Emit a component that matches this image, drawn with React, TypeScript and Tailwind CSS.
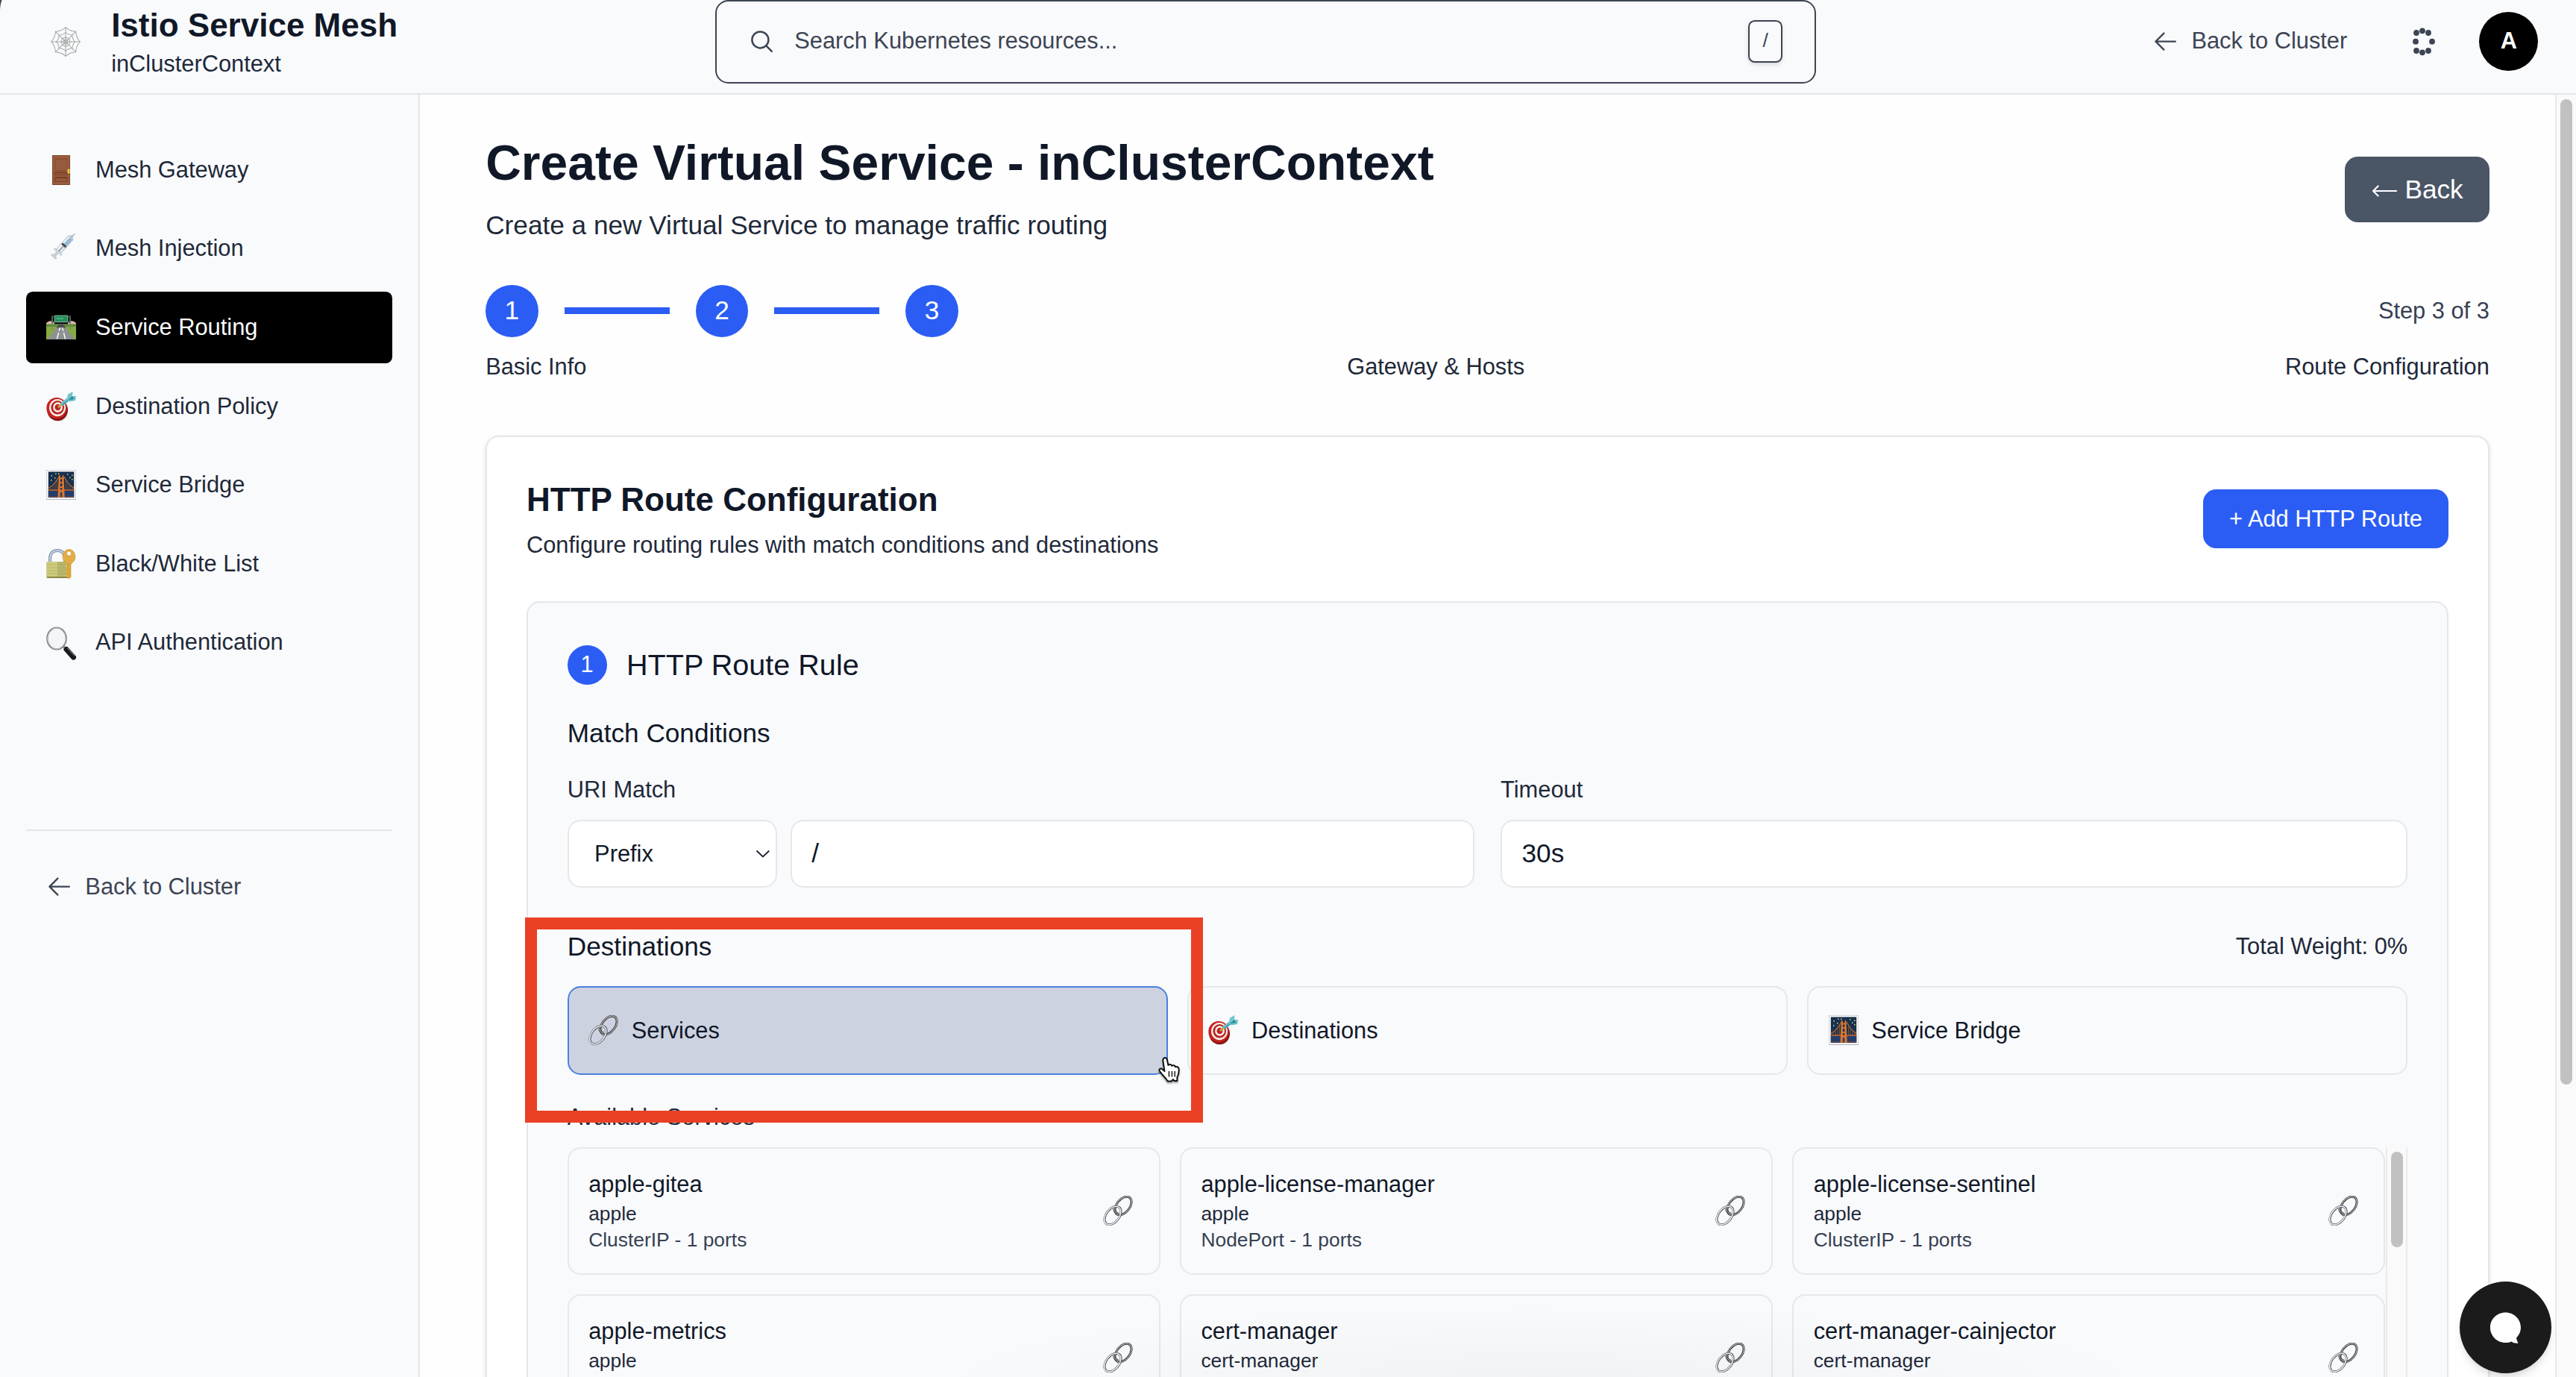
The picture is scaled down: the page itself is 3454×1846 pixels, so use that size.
import type { ReactNode } from "react";

/* ---------- pictograms ---------- */

const emojiClass = "size-[18.2px] shrink-0";

function WebIcon() {
  const angles = [0, 45, 90, 135, 180, 225, 270, 315];
  const pt = (a: number, r: number) => {
    const t = (a * Math.PI) / 180;
    return `${(20 + r * Math.sin(t)).toFixed(2)} ${(20 - r * Math.cos(t)).toFixed(2)}`;
  };
  const ring = (r: number) =>
    `M${pt(0, r)}` + angles.map((a) => `Q${pt(a + 22.5, r * 0.78)} ${pt(a + 45, r)}`).join("");
  return (
    <svg viewBox="0 0 40 40" className="h-[18.2px] w-[18.2px] shrink-0" fill="none" stroke="#a3a3a3" strokeWidth="1">
      {angles.map((a) => (
        <path key={a} d={`M20 20L${pt(a, 19.5)}`} />
      ))}
      <path d={ring(19.3)} />
      <path d={ring(12.5)} />
      <path d={ring(6.5)} />
      <path d={ring(3.2)} />
    </svg>
  );
}

function DoorIcon() {
  return (
    <svg viewBox="0 0 40 40" className={emojiClass}>
      <rect x="8" y="0" width="24" height="40" rx="0.8" fill="#7c452c" />
      <rect x="9" y="1" width="22" height="38" fill="#9a5d3f" />
      <rect x="11.5" y="4" width="17" height="17.5" fill="#874c31" />
      <rect x="12.5" y="5.5" width="15" height="15" fill="#975a3c" />
      <rect x="11.5" y="22.5" width="17" height="4.6" fill="#743e27" />
      <rect x="12.5" y="24" width="15" height="2.4" fill="#925539" />
      <rect x="11.5" y="29" width="17" height="7" fill="#743e27" />
      <rect x="12.5" y="31" width="15" height="4.3" fill="#96593c" />
      <rect x="28.6" y="18.5" width="3" height="6" rx="1" fill="#f4cf4a" />
      <rect x="27.3" y="20.4" width="3.6" height="1.8" rx="0.9" fill="#d9a526" />
    </svg>
  );
}

function SyringeIcon() {
  return (
    <svg viewBox="0 0 40 40" className={emojiClass}>
      <path d="M31 8.500L39.500 -1" stroke="#a2aab2" strokeWidth="1.100" />
      <g transform="rotate(42 20 20)">
        <path d="M17.500 0L19 -4h2L22.500 0z" fill="#b9c2ca" />
        <rect x="15.800" y="0" width="8.400" height="25" rx="1.500" fill="#e1e7ec" stroke="#9aa5b0" strokeWidth="0.700" />
        <rect x="17" y="1" width="6.400" height="13" fill="#92b9d8" />
        <rect x="16.600" y="1" width="2" height="23" fill="#f6f9fc" opacity="0.850" />
        <rect x="16.500" y="13" width="7" height="2.800" fill="#3a4147" />
        <rect x="19.300" y="15.500" width="1.600" height="12" fill="#9099a2" />
        <rect x="13.500" y="25" width="13" height="2.400" rx="1.200" fill="#d5dbe0" stroke="#a2abb3" strokeWidth="0.500" />
        <rect x="18" y="27.400" width="4" height="6" fill="#c5cdd4" />
        <rect x="15.800" y="33" width="8.400" height="3" rx="1.500" fill="#d0d5da" stroke="#a2a9b0" strokeWidth="0.500" />
      </g>
    </svg>
  );
}

function RoadIcon() {
  return (
    <svg viewBox="0 0 40 40" className={emojiClass}>
      <path d="M0 14Q5 9 11 13L11 18H0zM29 13Q35 9 40 14V18H29z" fill="#d9bfae" />
      <rect x="0" y="15.500" width="40" height="20.500" fill="#86ab42" />
      <rect x="0" y="15.500" width="40" height="3.500" fill="#628c38" />
      <path d="M17.500 15.500h5L38 36H2z" fill="#8d9194" />
      <path d="M17.500 15.500h5l4 5h-13z" fill="#4b4f52" />
      <path d="M18.600 20l-1.400 4.500M16.600 27l-2.200 8.500M21.400 20l1.400 4.500M23.400 27l2.200 8.500" stroke="#fff" strokeWidth="1.400" />
      <path d="M8 4v19M32 4v19" stroke="#7b8084" strokeWidth="1.400" />
      <path d="M7 5.500h26M7 13h26" stroke="#42474b" strokeWidth="1.200" />
      <rect x="11" y="4" width="18" height="8.500" rx="0.800" fill="#1f8f5a" stroke="#b8d9c6" strokeWidth="0.700" />
      <path d="M14 8h9" stroke="#6dc196" strokeWidth="1.200" />
    </svg>
  );
}

function TargetIcon() {
  return (
    <svg viewBox="0 0 40 40" className={emojiClass}>
      <ellipse cx="15" cy="24.500" rx="14" ry="14.800" transform="rotate(-12 15 24.500)" fill="#8a1815" />
      <ellipse cx="14" cy="22" rx="13.700" ry="14" fill="#c8231f" />
      <ellipse cx="15" cy="21.500" rx="11" ry="11.600" fill="#f4efee" />
      <ellipse cx="15.200" cy="21.300" rx="8.800" ry="9.300" fill="#bb2622" />
      <ellipse cx="15.500" cy="21" rx="6.400" ry="6.800" fill="#f4efee" />
      <ellipse cx="15.500" cy="21" rx="4" ry="4.300" fill="#bb2622" />
      <path d="M16 21L23 14.500" stroke="#d3a640" strokeWidth="2.800" />
      <path d="M20.500 17.500L32 8" stroke="#67bdc8" strokeWidth="4.600" />
      <path d="M21.500 18L32 9.500" stroke="#3a98a6" strokeWidth="1.200" />
      <path d="M27.500 11L29 3.500L35.500 0L35 6L40 6L39 12L31 13.500z" fill="#72c6cf" />
      <path d="M29 11.500L35 6L37.500 10z" fill="#2f8c98" />
    </svg>
  );
}

function BridgeIcon() {
  const stars = [
    [6.5, 7], [12, 4.5], [16, 4.5], [28, 5], [34, 6.5], [6, 13], [34, 12], [31, 9.5], [11, 10],
  ];
  return (
    <svg viewBox="0 0 40 40" className={emojiClass}>
      <rect x="0" y="0" width="40" height="40" fill="#b4b8bc" />
      <rect x="0.600" y="0.600" width="38.800" height="38.200" fill="#fdfdfd" />
      <rect x="2.800" y="2.400" width="34.400" height="34.500" fill="#16304f" />
      <rect x="2.800" y="26" width="34.400" height="11" fill="#223d6b" />
      {stars.map(([x, y], i) => (
        <rect key={i} x={x} y={y} width="1.500" height="1.500" fill="#e9d468" />
      ))}
      <path d="M3 24.500Q12 19 17 9M37 24.500Q29 19 24 9" stroke="#c56c30" strokeWidth="1.100" fill="none" />
      <path d="M6 22v5M9 20v7M12 17.500v9M14.500 14v12M26.500 14v12M29 17.500v9M32 20v7M35 22v5" stroke="#95562f" strokeWidth="0.900" />
      <path d="M3 27h34" stroke="#a85c33" strokeWidth="2.200" />
      <path d="M3 35.500h34" stroke="#8a4a2c" strokeWidth="1.200" opacity="0.700" />
      <path d="M15.500 36.800L16.700 9L17.500 6L19 9L18.800 36.800zM21.200 36.800L21.300 9L22.800 6L23.500 9L24.700 36.800z" fill="#d9762f" />
      <path d="M17 11.500h6.500M17 17h6.500M16.500 23h7.500M16.500 29h7.500" stroke="#d9762f" strokeWidth="2" />
    </svg>
  );
}

function LockKeyIcon() {
  return (
    <svg viewBox="0 0 40 40" className={emojiClass}>
      <path d="M5 19V12Q6 2 15 2Q24 2 25 12V19" fill="none" stroke="#7c8ca0" strokeWidth="4" />
      <path d="M5 19V12Q6 2 15 2Q24 2 25 12V19" fill="none" stroke="#c4d2e2" strokeWidth="2" />
      <rect x="0.600" y="17" width="29" height="22" rx="1" fill="#8b8744" />
      <rect x="0.600" y="17" width="29" height="20" rx="1" fill="#cdcc7d" />
      <path d="M1 21h28M1 25h28M1 29h28M1 33h28" stroke="#b9b869" strokeWidth="1" />
      <rect x="15" y="17" width="11" height="20" fill="#8f8f50" opacity="0.350" />
      <path d="M28 15h5v22.500L30.500 40 28 37.500v-3l-2-1.500 2-2v-2l-2-1.500 2-2z" fill="#dfa63a" stroke="#c08a28" strokeWidth="0.500" />
      <path fillRule="evenodd" d="M30.500 0.500a8.500 9.800 0 1 0 .01 0zM30.500 3a3 3 0 1 1-.01 0z" fill="#e3ad45" stroke="#c08a28" strokeWidth="0.500" />
    </svg>
  );
}

function MagnifierIcon() {
  return (
    <svg viewBox="0 0 40 40" className={emojiClass} overflow="visible">
      <path d="M22 24.500l4 4" stroke="#8a8f94" strokeWidth="3" />
      <path d="M27 29.500l9.500 10.500" stroke="#17191b" strokeWidth="7" strokeLinecap="round" />
      <path d="M28.500 28l9.500 10" stroke="#6b6f73" strokeWidth="1.200" strokeLinecap="round" />
      <ellipse cx="14" cy="15" rx="12.700" ry="14.500" fill="#f4f5f6" stroke="#6d747b" strokeWidth="2.200" />
      <ellipse cx="14" cy="15" rx="12.500" ry="14.300" fill="none" stroke="#c3ccd6" strokeWidth="0.900" />
    </svg>
  );
}

function LinkIcon() {
  return (
    <svg viewBox="0 0 40 40" className={emojiClass} fill="none">
      <g transform="rotate(-52 27 13.500)">
        <ellipse cx="27" cy="13.500" rx="14" ry="8.800" stroke="#3f3d3c" strokeWidth="3" />
        <ellipse cx="27" cy="13.500" rx="14.200" ry="9" stroke="#c9cdd2" strokeWidth="1" />
      </g>
      <g transform="rotate(-52 13 26.500)">
        <ellipse cx="13" cy="26.500" rx="14" ry="8.800" stroke="#4d545c" strokeWidth="3" />
        <ellipse cx="12.800" cy="26.300" rx="14" ry="8.800" stroke="#eef3f8" strokeWidth="1.500" />
      </g>
      <path d="M14.500 17.500Q15.500 23.500 20.500 23.500" stroke="#3f3d3c" strokeWidth="2.800" />
      <path d="M14.500 17.500Q15.500 23.500 20.500 23.500" stroke="#c9cdd2" strokeWidth="0.900" />
    </svg>
  );
}

function ArrowIcon() {
  return (
    <svg
      viewBox="0 0 24 24"
      className="size-4 shrink-0"
      fill="none"
      stroke="currentColor"
      strokeWidth="1.600"
      strokeLinecap="round"
      strokeLinejoin="round"
    >
      <path d="M10.500 19.500L3 12M3 12l7.500-7.500M3 12h18" />
    </svg>
  );
}

function DotsIcon() {
  const dots = [
    [21, 23], [29, 20.3], [37, 23], [20, 34.7], [42, 34.7], [21, 47], [29, 49.3], [37, 47],
  ];
  return (
    <svg viewBox="15 15 32 40" className="h-[18.2px] w-[14.55px]" fill="#3d4554">
      {dots.map(([x, y], i) => (
        <circle key={i} cx={x} cy={y} r="3.900" />
      ))}
    </svg>
  );
}

function HandCursor() {
  return (
    <svg viewBox="0 0 32 36" className="h-[16.4px] w-[14.5px] drop-shadow-[0_1px_0.5px_rgba(0,0,0,0.35)]">
      <path
        d="M8.500 2.500C10.500 1 12.500 2.500 13 5L14.500 12C15.500 10.500 18.500 10.500 19.300 12.800C20.800 11.500 23.500 12 24 14.200C26 13.200 28.700 14.500 28.800 17.500C29 22 28.500 25 26.500 28V33H22.500L21 31L19 33.500H13.500C12.500 30.500 9 27.500 6.500 24.500L3 20C1.500 17.500 4 15.500 6 17L9.500 20L7.500 6.500C7.200 4.500 7.500 3.300 8.500 2.500Z"
        fill="#fff"
        stroke="#111"
        strokeWidth="2"
        strokeLinejoin="round"
      />
      <path d="M15.500 20v7.500M19.500 20v7.500M23.300 20v7.500" stroke="#111" strokeWidth="1.500" />
    </svg>
  );
}

/* ---------- data ---------- */

const navItems: { label: string; icon: ReactNode; active?: boolean }[] = [
  { label: "Mesh Gateway", icon: <DoorIcon /> },
  { label: "Mesh Injection", icon: <SyringeIcon /> },
  { label: "Service Routing", icon: <RoadIcon />, active: true },
  { label: "Destination Policy", icon: <TargetIcon /> },
  { label: "Service Bridge", icon: <BridgeIcon /> },
  { label: "Black/White List", icon: <LockKeyIcon /> },
  { label: "API Authentication", icon: <MagnifierIcon /> },
];

const services: { name: string; ns: string; info?: string }[] = [
  { name: "apple-gitea", ns: "apple", info: "ClusterIP - 1 ports" },
  { name: "apple-license-manager", ns: "apple", info: "NodePort - 1 ports" },
  { name: "apple-license-sentinel", ns: "apple", info: "ClusterIP - 1 ports" },
  { name: "apple-metrics", ns: "apple" },
  { name: "cert-manager", ns: "cert-manager" },
  { name: "cert-manager-cainjector", ns: "cert-manager" },
];

/* ---------- sections ---------- */

function Header() {
  return (
    <header className="-mt-[6.27px] flex h-16 shrink-0 items-center border-b border-[#e4e5e9] bg-[#f9fafc]">
      <div className="flex w-[435.9px] items-center pl-[31px]">
        <WebIcon />
        <div className="ml-[18.6px]">
          <h1 className="text-xl font-bold text-[#101828]">Istio Service Mesh</h1>
          <p className="text-sm text-[#1e2939]">inClusterContext</p>
        </div>
      </div>
      <div className="flex h-[51px] w-[671px] items-center rounded-lg border border-[#3d4554] pr-[19.5px] pl-[19.4px]">
        <svg
          viewBox="0 0 24 24"
          className="size-4"
          fill="none"
          stroke="#3d4554"
          strokeWidth="1.700"
          strokeLinecap="round"
        >
          <circle cx="10.500" cy="10.500" r="7.500" />
          <path d="M21 21l-5.200-5.200" />
        </svg>
        <span className="mb-[1px] ml-3 text-sm text-[#3d4554]">Search Kubernetes resources...</span>
        <kbd className="ml-auto flex h-[26px] w-[21px] items-center justify-center rounded border border-[#3d4554] pb-[1px] font-['Liberation_Sans',Arial,sans-serif] text-xs text-[#3d4554] shadow-sm">
          /
        </kbd>
      </div>
      <div className="ml-auto flex items-center pr-[23px] text-[#3d4554]">
        <ArrowIcon />
        <span className="mb-[1px] ml-2 text-sm">Back to Cluster</span>
        <div className="ml-[39.6px]">
          <DotsIcon />
        </div>
        <div className="ml-[26.3px] flex size-9 items-center justify-center rounded-full bg-black pb-[1px] text-sm font-bold text-white">
          A
        </div>
      </div>
    </header>
  );
}

function Sidebar() {
  return (
    <aside className="w-64 shrink-0 border-r border-[#e4e5e9] bg-[#f9fafc] px-4 pt-[23.8px]">
      <nav className="flex h-[424px] flex-col gap-1">
        {navItems.map((n) => (
          <a
            key={n.label}
            className={
              n.active
                ? "flex h-11 items-center gap-[12px] rounded bg-black px-3 text-sm text-white"
                : "flex h-11 items-center gap-[12px] rounded px-3 text-sm text-[#1e2939]"
            }
          >
            {n.icon}
            {n.label}
          </a>
        ))}
      </nav>
      <div className="flex border-t border-[#e4e5e9] pt-6 pl-3 text-sm text-[#3d4554]">
        <div className="flex items-center gap-2">
          <ArrowIcon />
          Back to Cluster
        </div>
      </div>
    </aside>
  );
}

function Stepper() {
  const circle = "flex size-8 items-center justify-center rounded-full bg-[#2b5df4] text-base text-white";
  return (
    <div className="mt-6">
      <div className="flex items-center justify-between">
        <div className="flex items-center gap-4">
          <span className={circle}>1</span>
          <span className="h-1 w-16 bg-[#2b5df4]" />
          <span className={circle}>2</span>
          <span className="h-1 w-16 bg-[#2b5df4]" />
          <span className={circle}>3</span>
        </div>
        <span className="text-sm text-[#364153]">Step 3 of 3</span>
      </div>
      <div className="mt-2 flex justify-between text-sm text-[#1e2939]">
        <span>Basic Info</span>
        <span>Gateway &amp; Hosts</span>
        <span>Route Configuration</span>
      </div>
    </div>
  );
}

function RouteRule() {
  const field = "h-[41.4px] rounded-lg border border-[#e5e7eb] bg-white";
  const tab = "flex h-[54px] items-center gap-2 rounded-lg border px-3 text-sm text-[#101828]";
  return (
    <section className="relative mt-6 rounded-lg border border-[#e4e6ea] bg-[#f9fafc] p-6">
      <div className="flex items-center gap-3">
        <span className="flex size-6 items-center justify-center rounded-full bg-[#2b5df4] text-sm text-white">1</span>
        <h3 className="text-lg text-[#101828]">HTTP Route Rule</h3>
      </div>

      <h4 className="mt-4 text-base text-[#101828]">Match Conditions</h4>
      <div className="mt-[12.4px] grid grid-cols-2 gap-4">
        <div>
          <label className="block text-sm text-[#1e2939]">URI Match</label>
          <div className="mt-2 flex gap-2">
            <div className={`${field} flex w-32 items-center justify-between pr-[3.5px] pl-[15.6px] text-sm text-[#101828]`}>
              Prefix
              <svg viewBox="0 0 20 10" className="h-[4.5px] w-[9px]" fill="none" stroke="#222833" strokeWidth="2">
                <path d="M1.500 0.500L10 8.500L18.500 0.500" />
              </svg>
            </div>
            <div className={`${field} flex flex-1 items-center px-3 text-base text-[#101828]`}>/</div>
          </div>
        </div>
        <div>
          <label className="block text-sm text-[#1e2939]">Timeout</label>
          <div className={`${field} mt-2 flex items-center px-3 text-base text-[#101828]`}>30s</div>
        </div>
      </div>

      <div className="mt-6 flex items-center justify-between">
        <h4 className="text-base text-[#101828]">Destinations</h4>
        <span className="text-sm text-[#1e2939]">Total Weight: 0%</span>
      </div>
      <div className="mt-3 grid grid-cols-3 gap-3">
        <div className={`${tab} border-[#4a7fe3] bg-[#cdd2e0]`}>
          <LinkIcon />
          Services
        </div>
        <div className={`${tab} border-[#e5e7eb]`}>
          <TargetIcon />
          Destinations
        </div>
        <div className={`${tab} border-[#e5e7eb]`}>
          <BridgeIcon />
          Service Bridge
        </div>
      </div>

      <h5 className="mt-4 text-sm text-[#1e2939]">Available Services</h5>
      <div className="mt-2 flex h-[240px] overflow-hidden">
        <div className="grid flex-1 auto-rows-max grid-cols-3 gap-3">
          {services.map((s) => (
            <div
              key={s.name}
              className="flex h-[77.7px] items-center justify-between rounded-lg border border-[#e5e7eb] pr-[15.7px] pl-3"
            >
              <div className="h-[52px]">
                <div className="text-sm text-[#101828]">{s.name}</div>
                <div className="text-xs text-[#1e2939]">{s.ns}</div>
                {s.info && <div className="text-xs text-[#364153]">{s.info}</div>}
              </div>
              <LinkIcon />
            </div>
          ))}
        </div>
        <div className="ml-[0.5px] w-[13.2px] border-x border-[#ebebeb] bg-[#fafafa] pt-[2.7px] pl-[2.4px]">
          <div className="h-[58.2px] w-[7.2px] rounded-full bg-[#c1c1c1]" />
        </div>
      </div>

      {/* annotation frame and pointer over the selected destination type */}
      <div className="absolute top-[191.9px] -left-[1.8px] h-[125px] w-[413px] border-[7.7px] border-[#ea4025]" />
      <div className="absolute top-[276.5px] left-[383.5px]">
        <HandCursor />
      </div>
    </section>
  );
}

export default function App() {
  return (
    <div className="relative flex h-[839.09px] w-[1570px] flex-col overflow-hidden bg-white font-['Liberation_Sans',Arial,sans-serif] [zoom:2.2]">
      <Header />
      <div className="flex min-h-0 flex-1">
        <Sidebar />
        <main className="min-w-0 flex-1 overflow-hidden bg-[#fefefe] px-10 pt-[23.7px]">
          <div className="flex items-center justify-between">
            <div>
              <h1 className="text-3xl font-bold text-[#101828]">Create Virtual Service - inClusterContext</h1>
              <p className="mt-2 text-base text-[#1e2939]">Create a new Virtual Service to manage traffic routing</p>
            </div>
            <button className="flex h-10 items-center gap-[4.4px] rounded-lg bg-[#4a5565] px-4 text-base text-white">
              <svg
                viewBox="0 0 35 18"
                className="mt-[2px] h-[8.2px] w-4"
                fill="none"
                stroke="#fff"
                strokeWidth="2.200"
                strokeLinecap="round"
                strokeLinejoin="round"
              >
                <path d="M2 9H33M8.500 2.500L2 9L8.500 15.500" />
              </svg>
              Back
            </button>
          </div>
          <Stepper />
          <section className="mt-8 rounded-lg border border-[#e5e7eb] bg-white p-6 shadow-sm">
            <div className="flex items-center justify-between">
              <div>
                <h2 className="text-xl font-bold text-[#101828]">HTTP Route Configuration</h2>
                <p className="mt-1 text-sm text-[#1e2939]">
                  Configure routing rules with match conditions and destinations
                </p>
              </div>
              <button className="h-9 rounded-lg bg-[#2b5df4] px-4 text-sm text-white">+ Add HTTP Route</button>
            </div>
            <RouteRule />
          </section>
        </main>
        <div className="w-[12.8px] shrink-0 border-l border-[#e8e8e8] bg-[#fafafa] pt-[2.7px] pl-[2.5px]">
          <div className="h-[600.5px] w-[7.3px] rounded-full bg-[#c1c1c1]" />
        </div>
      </div>

      <div className="pointer-events-none absolute bottom-0 left-[560px] h-[45px] w-[760px] bg-[radial-gradient(ellipse_at_bottom,rgba(0,0,0,0.03),transparent_70%)]" />
      <button className="absolute right-[14.8px] bottom-[2.2px] flex size-14 items-center justify-center rounded-full bg-[#1b1b1b] shadow-md">
        <svg viewBox="0 0 42 42" className="h-[19.1px] w-[19.5px]" fill="#fff">
          <path d="M21 0.500C32.500 0.500 41.500 9.500 41.500 20.500C41.500 26.500 39 31 35.500 34.500C36 37 37 39.500 38 41.500C35 42 31.500 41.500 29 39.500C26.500 40.500 24 41 21 41C9.500 41 0.500 32 0.500 20.500C0.500 9.500 9.500 0.500 21 0.500Z" />
        </svg>
      </button>
      <svg viewBox="0 0 3 14" className="absolute top-0 left-0 h-[6.4px] w-[1.4px]" fill="#3a4450">
        <path d="M0 0H2.500Q0.500 5 0 13Z" />
      </svg>
    </div>
  );
}
